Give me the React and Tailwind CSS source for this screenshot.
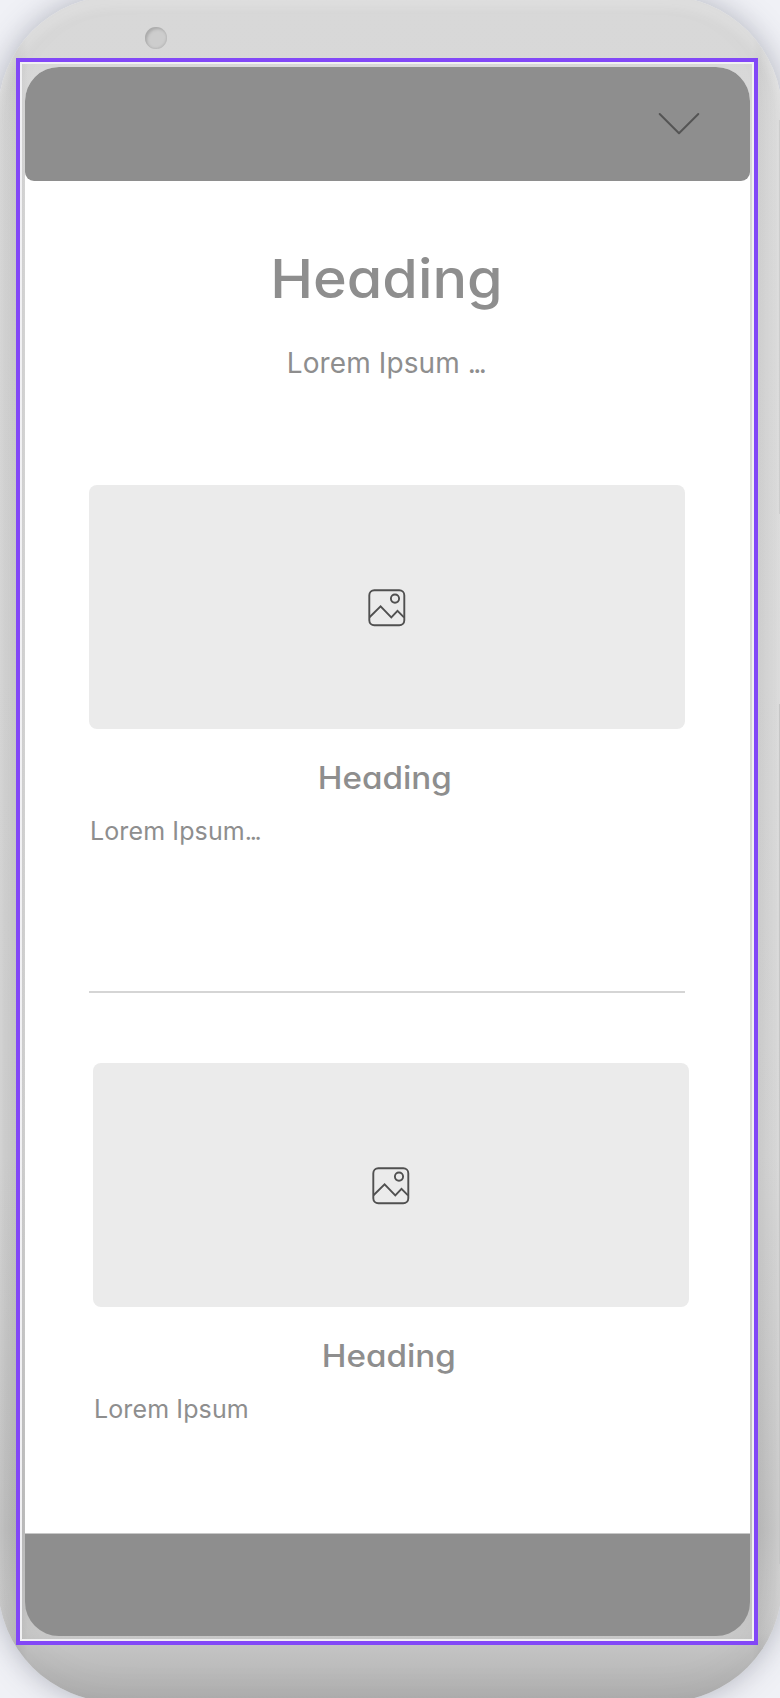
function ImageIcon() {
  return (
    <svg className="mt-px h-[38px] w-[38px]" viewBox="0 0 38 38" fill="none" stroke="#505050" strokeWidth="1.9" strokeLinejoin="miter">
      <rect x="1.3" y="1.3" width="35" height="35" rx="5" />
      <circle cx="27" cy="9.6" r="4.1" />
      <path d="M1.5 28.3 12.6 17.4 23.3 28.3 29.5 21.8 36 28.3" />
    </svg>
  );
}

function Card({ text, dots, className }) {
  return (
    <section className={`flex w-[596px] flex-col ${className}`}>
      <div className="flex h-[244px] items-center justify-center rounded-[8px] bg-[#ebebeb]">
        <ImageIcon />
      </div>
      <h2 className="mt-[29px] scale-x-[1.07] pr-[4px] text-center text-[31px] leading-[40px] font-medium">Heading</h2>
      <p className="mt-[17px] pl-px text-[25px] leading-[32px] font-normal tracking-[0.12px]">
        {text}
        {dots && <span className="tracking-[-2.4px]">{dots}</span>}
      </p>
    </section>
  );
}

export default function App() {
  return (
    <div className="relative h-[1698px] w-[780px] overflow-hidden bg-[#f0f1f6] font-['Inter','Open_Sans',sans-serif] text-[#8e8e8e] [font-feature-settings:'cv11']">
      <div className="-mx-[2px] -mt-[4px] h-[1706px] w-[784px] rounded-[118px] bg-[linear-gradient(180deg,#d8d8d8_0%,#d6d6d6_40%,#d2d2d2_68%,#bebebe_90%,#c8c8c8_96%,#b0b0b0_100%)] shadow-[0_0_30px_0px_rgba(70,75,95,0.38)]">
        <div className="flex h-full flex-col rounded-[118px] bg-[linear-gradient(90deg,rgba(255,255,255,0.12)_0px,rgba(0,0,0,0.06)_18px,transparent_30px,transparent_754px,rgba(0,0,0,0.03)_762px,rgba(255,255,255,0.24)_780px)] pt-[71px] pl-[27px] shadow-[inset_0_12px_9px_rgba(255,255,255,0.22),inset_0_-8px_36px_rgba(0,0,0,0.06)]">
          <div className="flex h-[1569px] w-[725px] flex-col overflow-hidden rounded-[34px]">
            <header className="flex h-[114px] w-full shrink-0 bg-white">
              <div className="flex h-full w-full justify-end rounded-b-[9px] bg-[#8e8e8e] pt-[45px] pr-[50.5px]">
                <svg className="h-[24px] w-[42px]" viewBox="0 0 42 24" fill="none" stroke="#555555" strokeWidth="2" strokeLinecap="round" strokeLinejoin="round">
                  <path d="M1.7 2 21 21.3 40.3 2" />
                </svg>
              </div>
            </header>
            <main className="flex h-[1352px] shrink-0 flex-col bg-white pt-[68px]">
              <h1 className="scale-x-[1.065] pr-[2px] text-center text-[54px] leading-[60px] font-medium">Heading</h1>
              <p className="mt-[34px] pr-[4px] text-center text-[28px] leading-[40px] font-normal tracking-[0.1px]">
                Lorem Ipsum <span className="tracking-[-2.6px]">...</span>
              </p>
              <Card text="Lorem Ipsum" dots="..." className="mt-[102px] ml-[64px]" />
              <hr className="mt-[144px] ml-[64px] w-[596px] border-t-2 border-[#d5d5d5]" />
              <Card text="Lorem Ipsum" className="mt-[70px] ml-[68px]" />
            </main>
            <footer className="grow border-t border-[#c8c8c8] bg-[#8e8e8e]" />
          </div>
        </div>
      </div>
      <div className="absolute top-[27px] left-[145px] h-[22px] w-[22px] rounded-full bg-[#cdcdcd] shadow-[inset_2px_2px_3px_#aaaaaa,inset_-1px_-1px_2px_#bbbbbb]" />
      <div className="absolute top-[120px] right-0 h-[394px] w-px bg-[#cdcdcd]" />
      <div className="absolute top-[704px] right-0 h-[860px] w-px bg-[#c6c6c6]" />
      <div className="absolute top-[58px] left-[16px] h-[1587px] w-[742px] border-4 border-[#8247f7]">
        <div className="h-full w-full border-2 border-[#f0f0f2]" />
      </div>
    </div>
  );
}
